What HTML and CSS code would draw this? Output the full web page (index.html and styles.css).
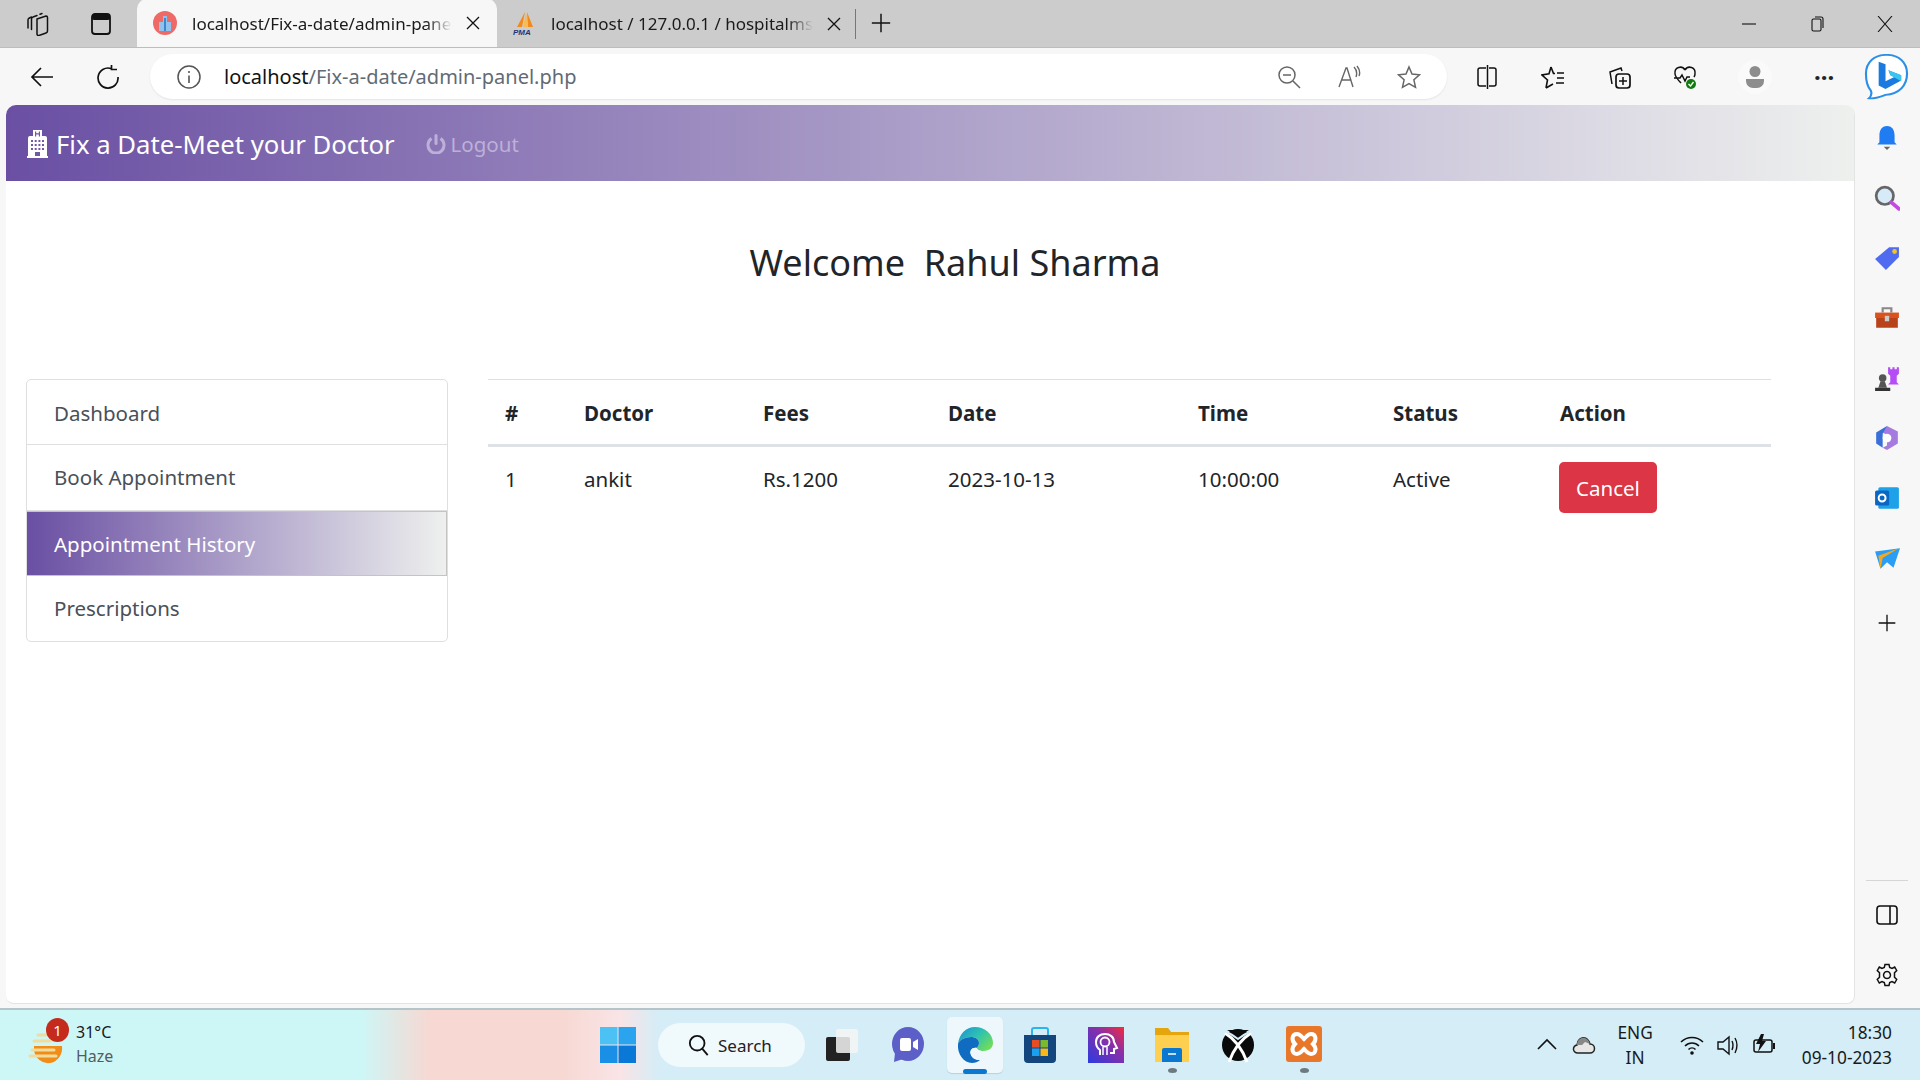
FILE: index.html
```html
<!DOCTYPE html>
<html lang="en">
<head>
    <meta charset="UTF-8">
    <title>Fix a Date</title>
    <link rel="stylesheet" href="styles.css">
</head>
<body>
<div id="window">
    <!-- tab strip -->
    <div class="tabbar">
        <div class="tab_tools">
            <svg class="ico" viewBox="0 0 24 24"><path d="M11 7l9-3a1.500 1.500 0 0 1 1.500 1.500V19a2 2 0 0 1-1.500 2l-7 2.500a1.500 1.500 0 0 1-2-1.500z" fill="none" stroke="#111" stroke-width="1.500"/><path d="M11 3.500L7 5a2 2 0 0 0-1.500 2v10.500M16 1.500l-2 .7M5.500 5L3 6.200a2 2 0 0 0-1 2V16" fill="none" stroke="#111" stroke-width="1.500" stroke-linecap="round"/></svg>
            <svg class="ico" viewBox="0 0 24 24"><rect x="3" y="2" width="18" height="20" rx="3" fill="none" stroke="#111" stroke-width="1.800"/><rect x="3" y="2" width="18" height="6" rx="2" fill="#111"/></svg>
        </div>
        <div class="tab tab_active">
            <svg class="favicon" viewBox="0 0 24 24"><circle cx="12" cy="12" r="12" fill="#ee6a66"/><path d="M6 20V11h4V5h4v6h4v9z" fill="#8fc3ee"/><path d="M11 7h2v13h-2z" fill="#3f86cc"/></svg>
            <span class="tab_title">localhost/Fix-a-date/admin-pane</span>
            <svg class="tab_close" viewBox="0 0 14 14"><path d="M1 1l12 12M13 1L1 13" stroke="#111" stroke-width="1.300"/></svg>
        </div>
        <div class="tab">
            <svg class="favicon" viewBox="0 0 24 24"><path d="M12 0L9 15H4z" fill="#f08a1d"/><path d="M14 0l6 15h-5z" fill="#f08a1d"/><path d="M10 15l3-15 2 15z" fill="#f7bb5a"/><text x="0" y="23" class="pma">PMA</text></svg>
            <span class="tab_title">localhost / 127.0.0.1 / hospitalms</span>
            <svg class="tab_close" viewBox="0 0 14 14"><path d="M1 1l12 12M13 1L1 13" stroke="#111" stroke-width="1.300"/></svg>
        </div>
        <div class="tab_sep"></div>
        <svg class="newtab" viewBox="0 0 24 24"><path d="M12 2v20M2 12h20" stroke="#111" stroke-width="1.600" fill="none"/></svg>
        <div class="win_btns">
            <svg viewBox="0 0 16 16"><path d="M1 8h14" stroke="#111" stroke-width="1.100"/></svg>
            <svg viewBox="0 0 16 16"><rect x="3" y="3" width="9" height="12" rx="1.500" fill="none" stroke="#111" stroke-width="1.100"/><path d="M6 1h6a2 2 0 0 1 2 2v9" fill="none" stroke="#111" stroke-width="1.100"/></svg>
            <svg viewBox="0 0 16 16"><path d="M1 0l14 16M15 0L1 16" stroke="#111" stroke-width="1.100"/></svg>
        </div>
    </div>

    <!-- address bar -->
    <div class="toolbar">
        <svg class="ico nav_ico" viewBox="0 0 24 24"><path d="M23 12H2M11 3l-9 9 9 9" fill="none" stroke="#111" stroke-width="1.700"/></svg>
        <svg class="ico nav_ico" viewBox="0 0 24 24"><path d="M15 3.500A10 10 0 1 0 22 12M15.500 -1v5.500H21" fill="none" stroke="#111" stroke-width="1.700"/></svg>
        <div class="addr">
            <svg class="addr_info" viewBox="0 0 24 24"><circle cx="12" cy="12" r="11" fill="none" stroke="#555" stroke-width="1.500"/><path d="M12 10.500V18M12 6v2" stroke="#555" stroke-width="1.600"/></svg>
            <span class="url"><b>localhost</b>/Fix-a-date/admin-panel.php</span>
            <div class="addr_right">
                <svg class="ico" viewBox="0 0 24 24"><circle cx="10" cy="10" r="8" fill="none" stroke="#666" stroke-width="1.500"/><path d="M6 10h8M16 16l7 7" stroke="#666" stroke-width="1.500"/></svg>
                <svg class="ico" viewBox="0 0 24 24"><path d="M2 22L9 3h1l6 19M4.500 15h10M17 2q4 4 2 10M20 1q4 5 2 10" fill="none" stroke="#666" stroke-width="1.400"/></svg>
                <svg class="ico" viewBox="0 0 24 24"><path d="M12 2l3 7 7.500.8-5.600 5 1.600 7.500L12 18.500 5.500 22.300l1.600-7.500-5.600-5L9 9z" fill="none" stroke="#666" stroke-width="1.500"/></svg>
            </div>
        </div>
        <div class="tool_icons">
            <svg class="ico" viewBox="0 0 24 24"><path d="M11 3H5a2 2 0 0 0-2 2v14a2 2 0 0 0 2 2h6M14 3h5a2 2 0 0 1 2 2v14a2 2 0 0 1-2 2h-5M12.500 0v24" fill="none" stroke="#111" stroke-width="1.500"/></svg>
            <svg class="ico" viewBox="0 0 24 24"><path d="M10 2l2.500 6.500H14M5 23l1.500-8L1 10l7-1.300L10 2M5 23l7-4" fill="none" stroke="#111" stroke-width="1.600"/><path d="M16 8h7M16 13h7M15 18h8" stroke="#111" stroke-width="1.600"/></svg>
            <svg class="ico" viewBox="0 0 24 24"><path d="M5 19L3 7l11-4 1 3" fill="none" stroke="#111" stroke-width="1.500"/><rect x="9" y="9" width="14" height="14" rx="3" fill="none" stroke="#111" stroke-width="1.700"/><path d="M16 12v8M12 16h8" stroke="#111" stroke-width="1.500"/></svg>
            <svg class="ico" viewBox="0 0 24 24"><path d="M12 5C9 0 1 2 2 9c.5 3 3 6 6 9M12 5c3-5 11-3 10 4 0 1-.3 2-1 3M1 13h6l2-3 3 6 2-4h3" fill="none" stroke="#111" stroke-width="1.500"/><circle cx="18" cy="19" r="5" fill="#107c10"/><path d="M15.500 19l2 2 3-4" stroke="#fff" stroke-width="1.300" fill="none"/></svg>
            <div class="avatar"><svg viewBox="0 0 24 24"><circle cx="12" cy="6.500" r="5.500" fill="#8d8d8d"/><path d="M3 14h18v2a7 7 0 0 1-7 7h-4a7 7 0 0 1-7-7z" fill="#8d8d8d"/></svg></div>
            <span class="more">&#183;&#183;&#183;</span>
        </div>
        <svg class="bing" viewBox="0 0 46 54" preserveAspectRatio="none"><path d="M23 1c13 0 21 9 21 22 0 14-8 24-22 25-5 2-11 5-17 4 3-3 3-6 2-9C3 38 2 31 2 23 2 10 10 1 23 1z" fill="#fff" stroke="#2b8fe8" stroke-width="2.200"/><path d="M15 9l7 3v20l9-5-4-2-2-6 13 6v6l-16 10-7-4z" fill="#1b7ae0"/><path d="M25 19l13 6v7l-11-7z" fill="#39c6ee"/></svg>
    </div>

    <!-- page + side panel -->
    <div class="middle">
        <div class="page">
            <nav class="navbar">
                <span class="brand">
                    <svg class="brand_ico" viewBox="0 0 21 28"><path fill="#fff" d="M6 0h9v6h3a2 2 0 0 1 2 2v18h1v2H0v-2h1V8a2 2 0 0 1 2-2h3z"/><path fill="#7259a8" d="M8 1.500h1.200v1.800h2.600V1.500H13v5h-1.200V4.500H9.200v2H8zM4 10h2v2H4zm3.700 0h2v2h-2zm3.700 0h2v2h-2zm3.600 0h2v2h-2zM4 14h2v2H4zm3.700 0h2v2h-2zm3.700 0h2v2h-2zm3.600 0h2v2h-2zM4 18h2v2H4zm3.700 0h2v2h-2zm3.700 0h2v2h-2zm3.600 0h2v2h-2zM8 22h5v4H8z"/></svg>
                    Fix a Date-Meet your Doctor
                </span>
                <a class="logout">
                    <svg viewBox="0 0 20 20"><path d="M5.500 4.500a8 8 0 1 0 9 0" fill="none" stroke="#bdb0d8" stroke-width="3"/><path d="M10 1.500v8" stroke="#bdb0d8" stroke-width="3" stroke-linecap="round"/></svg>
                    Logout
                </a>
            </nav>
            <h3 class="welcome">Welcome&nbsp; Rahul Sharma</h3>
            <div class="content">
                <ul class="list_group">
                    <li>Dashboard</li>
                    <li>Book Appointment</li>
                    <li class="current">Appointment History</li>
                    <li>Prescriptions</li>
                </ul>
                <table class="tb">
                    <thead>
                        <tr>
                            <th class="c1">#</th>
                            <th class="c2">Doctor</th>
                            <th class="c3">Fees</th>
                            <th class="c4">Date</th>
                            <th class="c5">Time</th>
                            <th class="c6">Status</th>
                            <th>Action</th>
                        </tr>
                    </thead>
                    <tbody>
                        <tr>
                            <td>1</td>
                            <td>ankit</td>
                            <td>Rs.1200</td>
                            <td>2023-10-13</td>
                            <td>10:00:00</td>
                            <td>Active</td>
                            <td><button class="btn_cancel">Cancel</button></td>
                        </tr>
                    </tbody>
                </table>
            </div>
        </div>
        <aside class="side">
            <div class="side_top">
                <svg viewBox="0 0 24 24"><path d="M12 1c5 0 7 4 7 9v6l2 2H3l2-2v-6c0-5 2-9 7-9z" fill="#1f7cf2"/><path d="M9 20h6l-3 3z" fill="#666"/></svg>
                <svg viewBox="0 0 24 24"><circle cx="10" cy="10" r="8" fill="#d6eaf8" stroke="#666" stroke-width="2.500"/><path d="M16 16l7 6" stroke="#c44be0" stroke-width="3.500" stroke-linecap="round"/></svg>
                <svg viewBox="0 0 24 24"><path d="M14 2h9v9L11 23 1 13z" fill="#4f6bf0"/><circle cx="19" cy="6" r="2.200" fill="#f5c518"/></svg>
                <svg viewBox="0 0 24 24"><path d="M8 7V3h8v4" fill="none" stroke="#888" stroke-width="2"/><path d="M1 7h22v5H1z" fill="#d9531e"/><path d="M2 12h20v9H2z" fill="#b8431a"/><rect x="10" y="10" width="4" height="5" fill="#ccc"/></svg>
                <svg viewBox="0 0 24 24"><circle cx="8" cy="12" r="3.500" fill="#555"/><path d="M6 15h4l2 6H4z" fill="#555"/><path d="M1 21h14v3H1z" fill="#333"/><path d="M13 2h2v2h2V2h2v2h2V2h2v6l-2 2v6l2 2H13l2-2v-6l-2-2z" fill="#b54cf5"/></svg>
                <svg viewBox="0 0 24 24"><path d="M12 1l10 5v11l-10 6-4-2 4-2V9L6 6z" fill="#a67be0"/><path d="M12 1L2 7v10l6 4V8z" fill="#3a6fd8"/><path d="M12 8a4 4 0 1 0 .01 0z" fill="#fff"/></svg>
                <svg viewBox="0 0 24 24"><rect x="4" y="2" width="19" height="20" rx="1.500" fill="#1da1e8"/><rect x="1" y="5" width="13" height="14" rx="1.500" fill="#0a66c2"/><circle cx="7.500" cy="12" r="3.200" fill="none" stroke="#fff" stroke-width="1.800"/></svg>
                <svg viewBox="0 0 24 24"><path d="M1 6l23-3-6 18-6-5-6 6z" fill="#2a9df4"/><path d="M6 22l-2-12 19-7-15 9z" fill="#f6a81c"/></svg>
                <svg class="side_plus" viewBox="0 0 24 24"><path d="M12 2v20M2 12h20" stroke="#111" stroke-width="1.600"/></svg>
            </div>
            <div class="side_bottom">
                <svg class="ico" viewBox="0 0 24 24"><rect x="2" y="3" width="20" height="18" rx="3" fill="none" stroke="#111" stroke-width="1.600"/><path d="M15 3v18" stroke="#111" stroke-width="1.600"/></svg>
                <svg class="ico" viewBox="0 0 24 24"><path d="M12 8.500a3.500 3.500 0 1 0 .01 0zM10 1.500h4l.7 3 2.300 1 2.700-1.500 2 3.500-2.200 2.200v4.600l2.200 2.200-2 3.500-2.700-1.500-2.300 1-.7 3h-4l-.7-3-2.300-1-2.700 1.500-2-3.500 2.200-2.200V9.700L2.300 7.500l2-3.500L7 5.500l2.300-1z" fill="none" stroke="#111" stroke-width="1.500"/></svg>
            </div>
        </aside>
    </div>

    <!-- windows taskbar -->
    <div class="taskbar">
        <div class="weather">
            <svg class="weather_ico" viewBox="0 0 36 36"><path d="M6 16h28a14 15 0 0 1-28 4z" fill="#f28c18"/><path d="M10 5h8M6 11h16M4 20h22M2 26h26" stroke="#f0dc9c" stroke-width="3" stroke-linecap="round"/></svg>
            <span class="badge">1</span>
            <div class="weather_txt"><span>31°C</span><span class="haze">Haze</span></div>
        </div>
        <div class="task_center">
            <svg class="task_ico start_ico" viewBox="0 0 36 36"><rect x="0" y="0" width="17.500" height="17.500" fill="#4cc2f4"/><rect x="18.500" y="0" width="17.500" height="17.500" fill="#2aa4ee"/><rect x="0" y="18.500" width="17.500" height="17.500" fill="#1a8fe6"/><rect x="18.500" y="18.500" width="17.500" height="17.500" fill="#0a78d6"/></svg>
            <div class="search">
                <svg viewBox="0 0 24 24"><circle cx="10" cy="10" r="8" fill="none" stroke="#111" stroke-width="2"/><path d="M15.500 16l6 7" stroke="#111" stroke-width="2"/></svg>
                Search
            </div>
            <svg class="task_ico" viewBox="0 0 36 36"><rect x="2" y="10" width="24" height="24" rx="2" fill="#222"/><rect x="12" y="2" width="22" height="24" rx="2" fill="#f4f4f4" opacity=".85"/></svg>
            <svg class="task_ico" viewBox="0 0 36 36"><ellipse cx="18" cy="17" rx="16" ry="17" fill="#5b5fc7"/><path d="M5 26l-1 9 9-3z" fill="#5b5fc7"/><rect x="10" y="11" width="11" height="13" rx="2" fill="#fff"/><path d="M23 15l5-3v11l-5-3z" fill="#fff"/></svg>
            <div class="task_edge">
                <svg class="edge_ico" viewBox="0 0 36 36"><defs><linearGradient id="eg" x1="0" y1="0" x2="1" y2=".7"><stop offset="0" stop-color="#1a8fd8"/><stop offset=".55" stop-color="#2fc3b0"/><stop offset="1" stop-color="#6fdc5c"/></linearGradient></defs><path d="M1 17C2 7 9 0 18 0c10 0 18 7 18 16 0 5-4 8-10 8-3 0-6-1-6-3 0-1 2-2 2-5 0-4-4-6-8-6C8 10 2 13 1 17z" fill="url(#eg)"/><path d="M1 17c1-4 7-7 13-7 4 0 8 2 8 6 0 3-2 4-2 5-5-1-8 3-6 7 1 3 5 5 9 5-2 2-5 3-8 3C7 36 0 27 1 17z" fill="#0f6cc0"/><path d="M14 28c-2-4 1-8 6-7 0 2 3 3 6 3 3 0 5 0 7-1-2 5-5 8-10 10-4 0-8-2-9-5z" fill="#eef8fc"/></svg>
                <span class="edge_mark"></span>
            </div>
            <svg class="task_ico" viewBox="0 0 36 36"><path d="M2 8h32v24a4 4 0 0 1-4 4H6a4 4 0 0 1-4-4z" fill="#14467e"/><path d="M10 8V3a2 2 0 0 1 2-2h12a2 2 0 0 1 2 2v5" fill="none" stroke="#2bb4ee" stroke-width="2"/><rect x="10" y="13" width="7.500" height="7.500" fill="#e74c24"/><rect x="18.500" y="13" width="7.500" height="7.500" fill="#7cb92c"/><rect x="10" y="21.500" width="7.500" height="7.500" fill="#1aa0ee"/><rect x="18.500" y="21.500" width="7.500" height="7.500" fill="#f7b917"/></svg>
            <svg class="task_ico" viewBox="0 0 36 36"><defs><linearGradient id="pg" x1="0" y1="1" x2="1" y2="0"><stop offset="0" stop-color="#2b3be0"/><stop offset=".6" stop-color="#8a2fa8"/><stop offset="1" stop-color="#f52a3c"/></linearGradient></defs><rect width="36" height="36" fill="url(#pg)"/><path d="M12 28v-5c-3-2-4-5-4-8 0-5 4-8 9-8s9 3 9 8l3 6-3 1v4h-4" fill="none" stroke="#fff" stroke-width="2"/><circle cx="17" cy="15" r="4.500" fill="none" stroke="#fff" stroke-width="1.800"/><path d="M15 20v8M19 20v8" stroke="#fff" stroke-width="1.500"/></svg>
            <div class="task_wrap">
                <svg class="task_ico" viewBox="0 0 36 36"><path d="M1 2h13l3 4h18v30H1z" fill="#ffd04f"/><path d="M1 2h13l3 4h18v3H1z" fill="#e5a50c"/><path d="M10 22h16a2 2 0 0 1 2 2v12H8V24a2 2 0 0 1 2-2z" fill="#0a78d0"/><path d="M14 28h8" stroke="#fff" stroke-width="1.500"/></svg>
                <span class="dot"></span>
            </div>
            <svg class="task_ico" viewBox="0 0 36 36"><circle cx="18" cy="18" r="16" fill="#0a0a0a"/><path d="M5 6c8 5 17 15 22 29M31 6C23 11 14 21 9 35" fill="none" stroke="#fff" stroke-width="3"/><path d="M7 3h22L18 9z" fill="#0a0a0a"/><path d="M4 3.500C9 6 14 9 18 12c4-3 9-6 14-8.500" fill="none" stroke="#d4edf7" stroke-width="2"/></svg>
            <div class="task_wrap">
                <svg class="task_ico" viewBox="0 0 36 36"><rect width="36" height="36" rx="3" fill="#e8772a"/><path d="M11 8c-5 0-6 6-2 10-4 4-3 10 2 10 3 0 5-3 7-5 2 2 4 5 7 5 5 0 6-6 2-10 4-4 3-10-2-10-3 0-5 3-7 5-2-2-4-5-7-5z" fill="none" stroke="#fff" stroke-width="4"/></svg>
                <span class="dot"></span>
            </div>
        </div>
        <div class="tray">
            <svg class="tray_ico" viewBox="0 0 24 24"><path d="M3 16l9-9 9 9" fill="none" stroke="#111" stroke-width="1.600"/></svg>
            <svg class="tray_ico" viewBox="0 0 24 24"><path d="M6 20a4 4 0 0 1-1-8c0-5 4-8 8-7 3 1 4 3 5 6a4.500 4.500 0 0 1 0 9z" fill="#e6e6e6" stroke="#222" stroke-width="1.500"/><path d="M5 12c0-5 4-8 8-7 3 1 4 3 5 6l-5-2-3 3z" fill="#888"/></svg>
            <div class="lang"><span>ENG</span><span>IN</span></div>
            <div class="tray_group">
                <svg class="tray_ico" viewBox="0 0 24 24"><path d="M1 9c6-6 16-6 22 0M5 13c4-4 10-4 14 0M8.500 16.500c2-2 5-2 7 0" fill="none" stroke="#111" stroke-width="1.600"/><circle cx="12" cy="20" r="1.800" fill="#111"/></svg>
                <svg class="tray_ico" viewBox="0 0 24 24"><path d="M2 9h5l6-5v17l-6-5H2z" fill="none" stroke="#111" stroke-width="1.400"/><path d="M16 8q2 4 0 9M19 5q4 7 0 15" fill="none" stroke="#111" stroke-width="1.400"/></svg>
                <svg class="tray_ico" viewBox="0 0 24 24"><rect x="2" y="7" width="18" height="12" rx="2" fill="none" stroke="#111" stroke-width="1.500"/><path d="M22 10v6" stroke="#111" stroke-width="2"/><path d="M9 1L4 11h4l-2 8 8-11h-4l2-7z" fill="#111"/></svg>
            </div>
            <div class="clock"><span>18:30</span><span>09-10-2023</span></div>
        </div>
    </div>
</div>
</body>
</html>
```

FILE: styles.css
```css
* {
    margin: 0;
    padding: 0;
    box-sizing: border-box;
}

html, body {
    width: 1920px;
    height: 1080px;
    overflow: hidden;
}

body {
    font-family: "Noto Sans", "Open Sans", "Liberation Sans", sans-serif;
    color: #212529;
}

#window {
    width: 1920px;
    height: 1080px;
    display: flex;
    flex-direction: column;
    background-color: #f7f7f7;
}

.ico {
    width: 24px;
    height: 24px;
    flex: none;
}

/* tab strip */
.tabbar {
    height: 48px;
    flex: none;
    display: flex;
    align-items: flex-end;
    background-color: #cccccc;
    padding-left: 26px;
    border-bottom: 1px solid #bdbdbd;
}

.tab_tools {
    width: 111px;
    height: 47px;
    display: flex;
    align-items: center;
    gap: 39px;
}

.tab {
    width: 360px;
    height: 47px;
    padding: 0 17px 0 16px;
    display: flex;
    align-items: center;
    gap: 14px;
    color: #1a1a1a;
}

.tab_active {
    height: 48px;
    background-color: #f7f7f7;
    border-radius: 10px 10px 0 0;
}

.tab_active .favicon {
    margin-right: 1px;
}

.favicon {
    width: 24px;
    height: 24px;
    flex: none;
}

.pma {
    font: italic bold 8px "Liberation Sans", sans-serif;
    fill: #23357a;
}

.tab_title {
    flex: 1;
    white-space: nowrap;
    font-size: 17px;
    -webkit-mask-image: linear-gradient(to right, #000 90%, transparent);
    mask-image: linear-gradient(to right, #000 90%, transparent);
}

.tab_close {
    width: 14px;
    height: 14px;
    flex: none;
}

.tab_sep {
    width: 1px;
    height: 30px;
    background-color: #777;
    margin: 0 0 8px -2px;
}

.newtab {
    width: 22px;
    height: 22px;
    margin: 0 0 13px 14px;
}

.win_btns {
    margin-left: auto;
    height: 47px;
    display: flex;
    align-items: center;
    gap: 52px;
    padding-right: 27px;
}

.win_btns svg {
    width: 16px;
    height: 16px;
}

/* address bar */
.toolbar {
    height: 57px;
    flex: none;
    display: flex;
    align-items: center;
    padding-left: 30px;
}

.nav_ico {
    margin-right: 42px;
}

.addr {
    width: 1297px;
    height: 45px;
    margin-left: -12px;
    padding: 0 26px 0 27px;
    display: flex;
    align-items: center;
    background-color: #ffffff;
    border-radius: 23px;
    box-shadow: 0 1px 2px rgba(0, 0, 0, .08);
}

.addr_info {
    width: 24px;
    height: 24px;
    margin-right: 23px;
}

.url {
    font-size: 20px;
    color: #5f6b75;
}

.url b {
    font-weight: 400;
    color: #111;
}

.addr_right {
    margin-left: auto;
    display: flex;
    gap: 36px;
}

.tool_icons {
    display: flex;
    align-items: center;
    gap: 42px;
    margin-left: 28px;
    width: 368px;
}

.avatar {
    width: 34px;
    height: 34px;
    margin: 0 0 0 -1px;
    border-radius: 50%;
    background-color: #fafafa;
    padding: 5px;
}

.avatar svg {
    display: block;
}

.more {
    font-size: 24px;
    font-weight: 700;
    line-height: 1;
}

.bing {
    width: 45px;
    height: 46px;
    margin-left: 21px;
    flex: none;
}

/* page */
.middle {
    flex: 1;
    display: flex;
    min-height: 0;
    padding-left: 6px;
}

.page {
    width: 1849px;
    height: 899px;
    background-color: #ffffff;
    border-radius: 10px 10px 8px 8px;
    border-right: 1px solid #e3e3e3;
    border-bottom: 1px solid #e3e3e3;
    overflow: hidden;
}

.navbar {
    height: 76px;
    display: flex;
    align-items: center;
    padding: 2px 0 0 21px;
    background: linear-gradient(to right, #6a4fa3, #eef0ee);
}

.brand {
    display: flex;
    align-items: center;
    gap: 8px;
    font-size: 25.700px;
    color: #ffffff;
}

.brand_ico {
    width: 21px;
    height: 28px;
}

.logout {
    display: flex;
    align-items: center;
    gap: 5px;
    margin-left: 31px;
    font-size: 20.500px;
    color: #bdb0d8;
}

.logout svg {
    width: 20px;
    height: 20px;
}

.welcome {
    margin-top: 55px;
    padding-left: 50px;
    text-align: center;
    font-size: 36px;
    font-weight: 400;
    line-height: 54px;
}

.content {
    display: flex;
    align-items: flex-start;
    gap: 40px;
    margin-top: 89px;
    padding-left: 20px;
}

.list_group {
    width: 422px;
    list-style: none;
    border: 1px solid #dfdfdf;
    border-radius: 5px;
    overflow: hidden;
}

.list_group li {
    height: 65.300px;
    line-height: 64px;
    padding-left: 27px;
    font-size: 20.500px;
    color: #495057;
    border-bottom: 1px solid #dfdfdf;
}

.list_group li:first-child {
    line-height: 66px;
}

.list_group li:last-child {
    border-bottom: 0;
}

.list_group .current {
    color: #ffffff;
    background: linear-gradient(to right, #6a4fa3, #eef0ee);
    border-top: 1px solid #c4c4c4;
    border-bottom: 1px solid #c4c4c4;
    border-right: 1px solid #c4c4c4;
}

.tb {
    width: 1283px;
    border-collapse: collapse;
    table-layout: fixed;
    font-size: 20.500px;
}

.tb th {
    height: 66px;
    padding: 2px 17px 0;
    text-align: left;
    font-weight: 700;
    border-top: 1px solid #dfdfdf;
    border-bottom: 3px solid #dee2e6;
}

.tb td {
    padding: 15px 17px;
    vertical-align: top;
    line-height: 34px;
}

.c1 { width: 79px; }
.c2 { width: 179px; }
.c3 { width: 185px; }
.c4 { width: 250px; }
.c5 { width: 195px; }
.c6 { width: 167px; }

.btn_cancel {
    display: block;
    width: 98px;
    height: 51px;
    margin-left: -1px;
    border: 0;
    border-radius: 5px;
    background-color: #dc3545;
    color: #ffffff;
    font-family: inherit;
    font-size: 20.500px;
}

/* right side panel */
.side {
    flex: 1;
    display: flex;
    flex-direction: column;
    align-items: center;
    height: 899px;
    padding: 20px 2px 0 0;
}

.side_top {
    display: flex;
    flex-direction: column;
    align-items: center;
    gap: 34px;
}

.side_top svg {
    width: 26px;
    height: 26px;
    display: block;
}

.side_top .side_plus {
    width: 20px;
    height: 20px;
    margin-top: 8px;
}

.side_bottom {
    margin-top: auto;
    width: 42px;
    display: flex;
    flex-direction: column;
    align-items: center;
    gap: 36px;
    border-top: 1px solid #d6d6d6;
    padding: 22px 0 17px;
}

/* taskbar */
.taskbar {
    height: 72px;
    flex: none;
    display: flex;
    align-items: center;
    position: relative;
    border-top: 2px solid #b4c4c8;
    background: linear-gradient(to right, #cdf7f7 0, #cdf7f7 360px, #f7d8d2 430px, #f7d8d2 560px, #f9e4e6 620px, #d4edf7 660px, #d4edf7 100%);
}

.weather {
    width: 560px;
    flex: none;
    display: flex;
    align-items: center;
    padding-left: 28px;
    position: relative;
}

.weather_ico {
    width: 36px;
    height: 42px;
    margin-top: 6px;
}

.badge {
    position: absolute;
    left: 46px;
    top: -3px;
    width: 23px;
    height: 24px;
    border-radius: 50%;
    background-color: #c42b1c;
    color: #ffffff;
    text-align: center;
    font-size: 15px;
    line-height: 24px;
}

.weather_txt {
    display: flex;
    flex-direction: column;
    margin: -2px 0 0 12px;
    font-size: 16px;
    line-height: 24px;
    color: #1a1a1a;
}

.haze {
    color: #555c60;
}

.task_center {
    display: flex;
    align-items: center;
    margin-left: 40px;
}

.task_ico {
    width: 36px;
    height: 36px;
    display: block;
    flex: none;
    margin-right: 30px;
}

.task_center .start_ico {
    margin-right: 22px;
}

.task_wrap .task_ico {
    margin-right: 0;
}

.search {
    width: 147px;
    height: 44px;
    margin-right: 19px;
    padding-left: 30px;
    display: flex;
    align-items: center;
    gap: 8px;
    border-radius: 22px;
    background-color: #f0f9fc;
    font-size: 17px;
    color: #222;
}

.search svg {
    width: 22px;
    height: 24px;
}

.task_edge {
    width: 56px;
    height: 56px;
    margin: 0 19px 0 -9px;
    padding-top: 10px;
    display: flex;
    flex-direction: column;
    align-items: center;
    background-color: #eef8fc;
    border-radius: 5px;
    box-shadow: 0 1px 1px rgba(0, 0, 0, .12);
}

.edge_ico {
    width: 36px;
    height: 36px;
    flex: none;
}

.edge_mark {
    width: 24px;
    height: 5px;
    margin-top: 6px;
    flex: none;
    border-radius: 3px;
    background-color: #0a78d0;
}

.task_wrap {
    width: 36px;
    height: 63px;
    margin-right: 30px;
    padding-top: 12px;
    display: flex;
    flex-direction: column;
    align-items: center;
}

.dot {
    width: 9px;
    height: 5px;
    margin-top: 6px;
    border-radius: 50%;
    background-color: #6e7a80;
}

.tray {
    position: absolute;
    right: 28px;
    top: 0;
    bottom: 0;
    display: flex;
    align-items: center;
}

.tray_ico {
    width: 24px;
    height: 24px;
    display: block;
}

.tray > .tray_ico {
    margin-right: 13px;
}

.lang, .clock {
    display: flex;
    flex-direction: column;
    line-height: 25px;
    font-size: 17.300px;
    color: #1a1a1a;
}

.lang {
    align-items: center;
    margin: 0 27px 0 8px;
}

.clock {
    align-items: flex-end;
    margin-left: 26px;
}

.tray_group {
    display: flex;
    gap: 12px;
}
```
